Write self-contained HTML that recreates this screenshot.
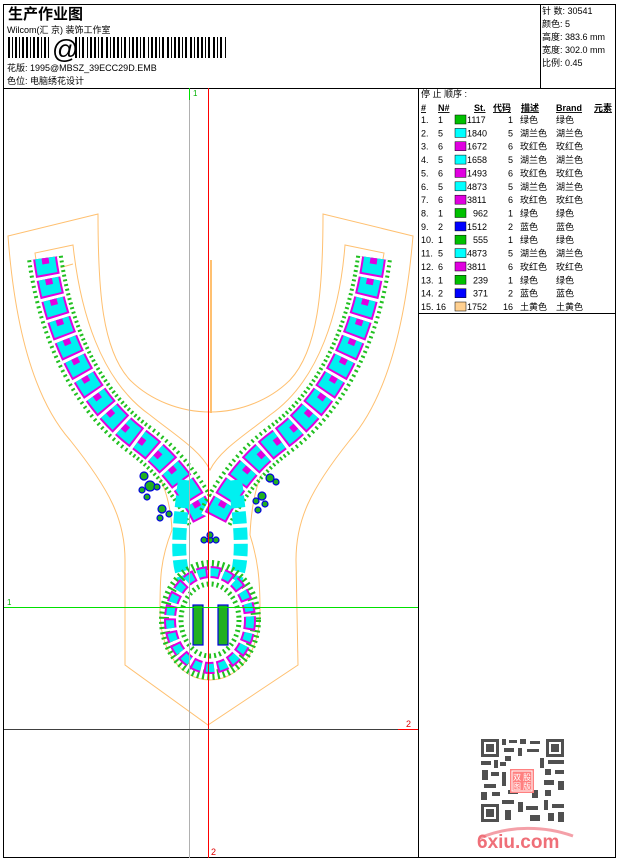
<!DOCTYPE html>
<html><head><meta charset="utf-8"><style>
html,body{margin:0;padding:0;background:#fff}
svg{display:block}
text{font-family:"Liberation Sans","WenQuanYi Zen Hei","Noto Sans CJK SC",sans-serif;fill:#000}
</style></head><body>
<svg width="620" height="860" viewBox="0 0 620 860" xmlns="http://www.w3.org/2000/svg">
<rect x="3.5" y="4.5" width="612" height="853" fill="none" stroke="#000"/>
<line x1="3" y1="88.5" x2="616" y2="88.5" stroke="#000"/>
<line x1="540.5" y1="4" x2="540.5" y2="88" stroke="#000"/>
<line x1="418.5" y1="88" x2="418.5" y2="858" stroke="#000"/>
<line x1="418" y1="313.5" x2="616" y2="313.5" stroke="#000"/>

<text x="8" y="19" font-size="15" font-weight="bold">生产作业图</text>
<text x="7" y="33" font-size="9">Wilcom(汇 京) 装饰工作室</text>
<g fill="#000">
<rect x="8" y="37" width="2" height="21"/><rect x="12" y="37" width="1" height="21"/><rect x="15" y="37" width="2" height="21"/><rect x="19" y="37" width="1" height="21"/><rect x="22" y="37" width="2" height="21"/><rect x="26" y="37" width="2" height="21"/><rect x="30" y="37" width="1" height="21"/><rect x="33" y="37" width="2" height="21"/><rect x="37" y="37" width="2" height="21"/><rect x="41" y="37" width="1" height="21"/><rect x="44" y="37" width="2" height="21"/><rect x="48" y="37" width="1" height="21"/>
<rect x="75" y="37" width="2" height="21"/><rect x="79" y="37" width="1" height="21"/><rect x="82" y="37" width="2" height="21"/><rect x="87" y="37" width="1" height="21"/><rect x="90" y="37" width="2" height="21"/><rect x="94" y="37" width="2" height="21"/><rect x="98" y="37" width="1" height="21"/><rect x="101" y="37" width="2" height="21"/><rect x="106" y="37" width="2" height="21"/><rect x="110" y="37" width="1" height="21"/><rect x="113" y="37" width="2" height="21"/><rect x="117" y="37" width="2" height="21"/><rect x="121" y="37" width="1" height="21"/><rect x="124" y="37" width="2" height="21"/><rect x="129" y="37" width="1" height="21"/><rect x="132" y="37" width="2" height="21"/><rect x="136" y="37" width="2" height="21"/><rect x="140" y="37" width="1" height="21"/><rect x="143" y="37" width="2" height="21"/><rect x="148" y="37" width="1" height="21"/><rect x="151" y="37" width="2" height="21"/><rect x="155" y="37" width="2" height="21"/><rect x="159" y="37" width="1" height="21"/><rect x="162" y="37" width="2" height="21"/><rect x="167" y="37" width="2" height="21"/><rect x="171" y="37" width="1" height="21"/><rect x="174" y="37" width="2" height="21"/><rect x="178" y="37" width="2" height="21"/><rect x="182" y="37" width="1" height="21"/><rect x="185" y="37" width="2" height="21"/><rect x="190" y="37" width="2" height="21"/><rect x="194" y="37" width="1" height="21"/><rect x="197" y="37" width="2" height="21"/><rect x="201" y="37" width="2" height="21"/><rect x="205" y="37" width="1" height="21"/><rect x="208" y="37" width="2" height="21"/><rect x="213" y="37" width="2" height="21"/><rect x="217" y="37" width="1" height="21"/><rect x="220" y="37" width="2" height="21"/><rect x="225" y="37" width="1" height="21"/>
</g>
<text x="52" y="58" font-size="26">@</text>
<text x="7" y="71" font-size="9">花版: 1995@MBSZ_39ECC29D.EMB</text>
<text x="7" y="84" font-size="9">色位: 电脑绣花设计</text>
<g font-size="9">
<text x="542" y="14">针 数: 30541</text>
<text x="542" y="27">颜色: 5</text>
<text x="542" y="40">高度: 383.6 mm</text>
<text x="542" y="53">宽度: 302.0 mm</text>
<text x="542" y="66">比例: 0.45</text>
</g>

<g font-size="9">
<text x="421" y="97">停 止 顺序 :</text>
<g font-weight="bold" text-decoration="underline">
<text x="421" y="111">#</text><text x="438" y="111">N#</text><text x="474" y="111">St.</text><text x="493" y="111">代码</text><text x="521" y="111">描述</text><text x="556" y="111">Brand</text><text x="594" y="111">元素</text>
</g>
</g>
<g font-size="9">
<g transform="translate(0,123)"><text x="421">1.</text><text x="438">1</text><rect x="455" y="-8" width="11" height="9" fill="#00c000" stroke="#000" stroke-width=".5"/><text x="467">1117</text><text x="513" text-anchor="end">1</text><text x="520">绿色</text><text x="556">绿色</text></g>
<g transform="translate(0,136.4)"><text x="421">2.</text><text x="438">5</text><rect x="455" y="-8" width="11" height="9" fill="#00ffff" stroke="#000" stroke-width=".5"/><text x="467">1840</text><text x="513" text-anchor="end">5</text><text x="520">湖兰色</text><text x="556">湖兰色</text></g>
<g transform="translate(0,149.7)"><text x="421">3.</text><text x="438">6</text><rect x="455" y="-8" width="11" height="9" fill="#e000e0" stroke="#000" stroke-width=".5"/><text x="467">1672</text><text x="513" text-anchor="end">6</text><text x="520">玫红色</text><text x="556">玫红色</text></g>
<g transform="translate(0,163.1)"><text x="421">4.</text><text x="438">5</text><rect x="455" y="-8" width="11" height="9" fill="#00ffff" stroke="#000" stroke-width=".5"/><text x="467">1658</text><text x="513" text-anchor="end">5</text><text x="520">湖兰色</text><text x="556">湖兰色</text></g>
<g transform="translate(0,176.4)"><text x="421">5.</text><text x="438">6</text><rect x="455" y="-8" width="11" height="9" fill="#e000e0" stroke="#000" stroke-width=".5"/><text x="467">1493</text><text x="513" text-anchor="end">6</text><text x="520">玫红色</text><text x="556">玫红色</text></g>
<g transform="translate(0,189.8)"><text x="421">6.</text><text x="438">5</text><rect x="455" y="-8" width="11" height="9" fill="#00ffff" stroke="#000" stroke-width=".5"/><text x="467">4873</text><text x="513" text-anchor="end">5</text><text x="520">湖兰色</text><text x="556">湖兰色</text></g>
<g transform="translate(0,203.2)"><text x="421">7.</text><text x="438">6</text><rect x="455" y="-8" width="11" height="9" fill="#e000e0" stroke="#000" stroke-width=".5"/><text x="467">3811</text><text x="513" text-anchor="end">6</text><text x="520">玫红色</text><text x="556">玫红色</text></g>
<g transform="translate(0,216.5)"><text x="421">8.</text><text x="438">1</text><rect x="455" y="-8" width="11" height="9" fill="#00c000" stroke="#000" stroke-width=".5"/><text x="488" text-anchor="end">962</text><text x="513" text-anchor="end">1</text><text x="520">绿色</text><text x="556">绿色</text></g>
<g transform="translate(0,229.9)"><text x="421">9.</text><text x="438">2</text><rect x="455" y="-8" width="11" height="9" fill="#0000ff" stroke="#000" stroke-width=".5"/><text x="467">1512</text><text x="513" text-anchor="end">2</text><text x="520">蓝色</text><text x="556">蓝色</text></g>
<g transform="translate(0,243.2)"><text x="421">10.</text><text x="438">1</text><rect x="455" y="-8" width="11" height="9" fill="#00c000" stroke="#000" stroke-width=".5"/><text x="488" text-anchor="end">555</text><text x="513" text-anchor="end">1</text><text x="520">绿色</text><text x="556">绿色</text></g>
<g transform="translate(0,256.6)"><text x="421">11.</text><text x="438">5</text><rect x="455" y="-8" width="11" height="9" fill="#00ffff" stroke="#000" stroke-width=".5"/><text x="467">4873</text><text x="513" text-anchor="end">5</text><text x="520">湖兰色</text><text x="556">湖兰色</text></g>
<g transform="translate(0,270)"><text x="421">12.</text><text x="438">6</text><rect x="455" y="-8" width="11" height="9" fill="#e000e0" stroke="#000" stroke-width=".5"/><text x="467">3811</text><text x="513" text-anchor="end">6</text><text x="520">玫红色</text><text x="556">玫红色</text></g>
<g transform="translate(0,283.3)"><text x="421">13.</text><text x="438">1</text><rect x="455" y="-8" width="11" height="9" fill="#00c000" stroke="#000" stroke-width=".5"/><text x="488" text-anchor="end">239</text><text x="513" text-anchor="end">1</text><text x="520">绿色</text><text x="556">绿色</text></g>
<g transform="translate(0,296.7)"><text x="421">14.</text><text x="438">2</text><rect x="455" y="-8" width="11" height="9" fill="#0000ff" stroke="#000" stroke-width=".5"/><text x="488" text-anchor="end">371</text><text x="513" text-anchor="end">2</text><text x="520">蓝色</text><text x="556">蓝色</text></g>
<g transform="translate(0,310)"><text x="421">15.</text><text x="436">16</text><rect x="455" y="-8" width="11" height="9" fill="#ffd090" stroke="#000" stroke-width=".5"/><text x="467">1752</text><text x="513" text-anchor="end">16</text><text x="520">土黄色</text><text x="556">土黄色</text></g>
</g>

<g fill="none" stroke="#ffc070" stroke-width="1">
<path d="M98,214 L8,236 C15,330 35,400 70,440 C110,490 125,520 125,560 L125,665 L208,725 L298,665 L296,560 C296,520 310,490 350,440 C385,400 405,330 413,236 L323,214 C323,290 318,350 290,380 C270,400 240,412 210,412 C180,412 150,400 130,380 C102,350 98,290 98,214 Z"/>
<path d="M73,264 L35,275"/>
<path d="M35,253 C45,330 75,400 130,440 C155,460 170,490 172,530 C160,560 160,580 160,610 C160,650 180,680 210,680 C240,680 260,650 260,610 C260,580 258,560 250,535 C252,490 262,460 288,440 C342,400 372,330 384,253 L345,245 C340,310 320,380 270,415 C245,435 220,450 210,470 C200,450 175,435 150,415 C100,380 80,310 73,245 Z"/>
<path d="M211,260 L211,413" stroke-width="2"/>
</g>
<g fill="none" stroke-linecap="butt">
<path d="M45,258 C55,330 85,400 140,440 C170,462 190,490 205,520" stroke="#20c020" stroke-width="36" stroke-dasharray="2 3"/>
<path d="M45,258 C55,330 85,400 140,440 C170,462 190,490 205,520" stroke="#fff" stroke-width="28"/>
<path d="M45,258 C55,330 85,400 140,440 C170,462 190,490 205,520" stroke="#e000e0" stroke-width="24" stroke-dasharray="18 3"/>
<path d="M45,258 C55,330 85,400 140,440 C170,462 190,490 205,520" stroke="#00f0f0" stroke-width="20" stroke-dasharray="16 5"/>
<path d="M45,258 C55,330 85,400 140,440 C170,462 190,490 205,520" stroke="#e000e0" stroke-width="7" stroke-dasharray="6 15"/>
<path d="M374,258 C364,330 334,400 279,440 C249,462 229,490 214,520" stroke="#20c020" stroke-width="36" stroke-dasharray="2 3"/>
<path d="M374,258 C364,330 334,400 279,440 C249,462 229,490 214,520" stroke="#fff" stroke-width="28"/>
<path d="M374,258 C364,330 334,400 279,440 C249,462 229,490 214,520" stroke="#e000e0" stroke-width="24" stroke-dasharray="18 3"/>
<path d="M374,258 C364,330 334,400 279,440 C249,462 229,490 214,520" stroke="#00f0f0" stroke-width="20" stroke-dasharray="16 5"/>
<path d="M374,258 C364,330 334,400 279,440 C249,462 229,490 214,520" stroke="#e000e0" stroke-width="7" stroke-dasharray="6 15"/>
<path d="M185,480 C180,520 175,560 185,580" stroke="#00f0f0" stroke-width="14" stroke-dasharray="12 4"/>
<path d="M235,480 C240,520 245,560 235,580" stroke="#00f0f0" stroke-width="14" stroke-dasharray="12 4"/>
<ellipse cx="210" cy="620" rx="46" ry="55" stroke="#20c020" stroke-width="10" stroke-dasharray="2 3"/>
<ellipse cx="210" cy="620" rx="40" ry="48" stroke="#e000e0" stroke-width="12" stroke-dasharray="10 3"/>
<ellipse cx="210" cy="620" rx="40" ry="48" stroke="#00f0f0" stroke-width="8" stroke-dasharray="8 5"/>
<ellipse cx="210" cy="620" rx="29" ry="36" stroke="#20c020" stroke-width="5" stroke-dasharray="2 3"/>
</g>
<g fill="#20b020" stroke="#0000e0" stroke-width="1.2">
<circle cx="144" cy="476" r="4"/><circle cx="150" cy="486" r="5"/><circle cx="142" cy="490" r="3"/><circle cx="157" cy="487" r="3"/><circle cx="147" cy="497" r="3"/>
<circle cx="162" cy="509" r="4"/><circle cx="169" cy="514" r="3"/><circle cx="160" cy="518" r="3"/>
<circle cx="270" cy="478" r="4"/><circle cx="276" cy="482" r="3"/><circle cx="262" cy="496" r="4"/><circle cx="256" cy="501" r="3"/><circle cx="265" cy="504" r="3"/><circle cx="258" cy="510" r="3"/>
<circle cx="204" cy="540" r="3"/><circle cx="210" cy="540" r="3"/><circle cx="216" cy="540" r="3"/><circle cx="210" cy="535" r="3"/>
<rect x="193" y="605" width="10" height="40"/><rect x="218" y="605" width="10" height="40"/>
</g>
<line x1="189.5" y1="88" x2="189.5" y2="858" stroke="#b0b0b0"/>
<line x1="189.5" y1="88" x2="189.5" y2="100" stroke="#00e000"/>
<line x1="208.5" y1="88" x2="208.5" y2="858" stroke="#ff0000"/>
<line x1="4" y1="607.5" x2="418" y2="607.5" stroke="#00e000"/>
<line x1="4" y1="729.5" x2="418" y2="729.5" stroke="#404040"/>
<line x1="398" y1="729.5" x2="418" y2="729.5" stroke="#ff0000"/>
<text x="193" y="96" font-size="8" style="fill:#00b000">1</text>
<text x="7" y="605" font-size="8" style="fill:#00b000">1</text>
<text x="406" y="727" font-size="9" style="fill:#e00000">2</text>
<text x="211" y="855" font-size="9" style="fill:#e00000">2</text>

<g fill="#505050">
<rect x="481" y="739" width="18" height="18"/><rect x="484" y="742" width="12" height="12" fill="#fff"/><rect x="486" y="744" width="8" height="8"/>
<rect x="546" y="739" width="18" height="18"/><rect x="549" y="742" width="12" height="12" fill="#fff"/><rect x="551" y="744" width="8" height="8"/>
<rect x="481" y="804" width="18" height="18"/><rect x="484" y="807" width="12" height="12" fill="#fff"/><rect x="486" y="809" width="8" height="8"/>
<rect x="502" y="739" width="4" height="6"/><rect x="509" y="740" width="8" height="3"/><rect x="520" y="739" width="6" height="5"/><rect x="530" y="741" width="10" height="3"/><rect x="504" y="748" width="10" height="4"/><rect x="518" y="748" width="4" height="8"/><rect x="527" y="749" width="12" height="3"/><rect x="505" y="756" width="6" height="5"/>
<rect x="481" y="761" width="10" height="4"/><rect x="494" y="760" width="4" height="8"/><rect x="548" y="760" width="16" height="4"/><rect x="540" y="758" width="4" height="10"/>
<rect x="482" y="770" width="6" height="10"/><rect x="491" y="772" width="8" height="4"/><rect x="545" y="769" width="6" height="6"/><rect x="555" y="770" width="9" height="4"/>
<rect x="484" y="784" width="12" height="4"/><rect x="481" y="792" width="6" height="8"/><rect x="492" y="792" width="8" height="4"/><rect x="544" y="780" width="10" height="5"/><rect x="558" y="781" width="6" height="9"/><rect x="545" y="790" width="6" height="6"/>
<rect x="502" y="800" width="12" height="4"/><rect x="518" y="802" width="5" height="10"/><rect x="505" y="810" width="6" height="10"/><rect x="526" y="806" width="12" height="4"/><rect x="530" y="815" width="10" height="6"/><rect x="544" y="800" width="4" height="10"/><rect x="552" y="804" width="12" height="4"/><rect x="548" y="813" width="6" height="8"/><rect x="558" y="812" width="6" height="10"/>
<rect x="500" y="762" width="6" height="4"/><rect x="502" y="772" width="4" height="14"/><rect x="508" y="790" width="10" height="4"/><rect x="532" y="790" width="6" height="8"/>
</g>
<rect x="510" y="769" width="24" height="24" fill="#ff8080"/>
<rect x="512" y="771" width="20" height="20" fill="none" stroke="#fff" stroke-width="1"/>
<text x="513" y="780" font-size="8" style="fill:#fff">双</text><text x="523" y="780" font-size="8" style="fill:#fff">股</text>
<text x="513" y="789" font-size="8" style="fill:#fff">图</text><text x="523" y="789" font-size="8" style="fill:#fff">版</text>
<path d="M480,838 C510,825 545,826 573,836" fill="none" stroke="#f4a0a8" stroke-width="3"/>
<text x="477" y="848" font-size="19" font-weight="bold" style="fill:#ef6f78">6xiu.com</text>
</svg>
</body></html>
